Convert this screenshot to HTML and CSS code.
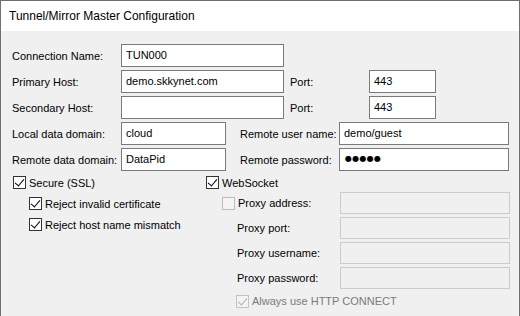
FILE: index.html
```html
<!DOCTYPE html>
<html lang="en">
<head>
  <meta charset="UTF-8" />
  <title>Tunnel/Mirror Master Configuration</title>
  <link rel="stylesheet" href="styles.css">
</head>
<body>
  <div class="window">
    <div class="titlebar">Tunnel/Mirror Master Configuration</div>

    <div class="content">
      <div class="row">
        <label class="lbl">Connection Name:</label>
        <div class="field wide">TUN000</div>
      </div>
      <div class="row">
        <label class="lbl">Primary Host:</label>
        <div class="field wide">demo.skkynet.com</div>
        <label class="lbl port-lbl">Port:</label>
        <div class="field port">443</div>
      </div>
      <div class="row">
        <label class="lbl">Secondary Host:</label>
        <div class="field wide"></div>
        <label class="lbl port-lbl">Port:</label>
        <div class="field port">443</div>
      </div>
      <div class="row">
        <label class="lbl">Local data domain:</label>
        <div class="field short">cloud</div>
        <label class="lbl remote-lbl">Remote user name:</label>
        <div class="field long">demo/guest</div>
      </div>
      <div class="row">
        <label class="lbl">Remote data domain:</label>
        <div class="field short">DataPid</div>
        <label class="lbl remote-lbl">Remote password:</label>
        <div class="field long"><span class="dots">●●●●●</span></div>
      </div>

      <div class="options">
        <div class="col-left">
          <div class="check-row">
            <span class="box checked"></span>Secure (SSL)
          </div>
          <div class="check-row sub">
            <span class="box checked"></span>Reject invalid certificate
          </div>
          <div class="check-row sub">
            <span class="box checked"></span>Reject host name mismatch
          </div>
        </div>

        <div class="col-right">
          <div class="check-row">
            <span class="box checked"></span>WebSocket
          </div>
          <div class="proxy">
            <div class="proxy-row">
              <div class="proxy-lbl"><span class="box off"></span>Proxy address:</div>
              <div class="field disabled"></div>
            </div>
            <div class="proxy-row">
              <div class="proxy-lbl indent">Proxy port:</div>
              <div class="field disabled"></div>
            </div>
            <div class="proxy-row">
              <div class="proxy-lbl indent">Proxy username:</div>
              <div class="field disabled"></div>
            </div>
            <div class="proxy-row">
              <div class="proxy-lbl indent">Proxy password:</div>
              <div class="field disabled"></div>
            </div>
            <div class="proxy-row always">
              <span class="box checked grey"></span>Always use HTTP CONNECT
            </div>
          </div>
        </div>
      </div>

      <div class="group-title">Data Flow Direction</div>
    </div>
  </div>
</body>
</html>
```

FILE: styles.css
```css
* {
  box-sizing: border-box;
  margin: 0;
  padding: 0;
}

html, body {
  width: 520px;
  height: 316px;
  overflow: hidden;
}

body {
  font-family: "Liberation Sans", Arial, sans-serif;
  font-size: 11px;
  color: #000;
  background: #f0f0f0;
  white-space: nowrap;
}

.window {
  height: 316px;
  overflow: hidden;
  border: 1px solid #707070;
  border-bottom: none;
  background: #f0f0f0;
}

.titlebar {
  height: 30px;
  line-height: 30px;
  padding-left: 8px;
  background: #fff;
  font-size: 12px;
}

.content {
  padding: 13px 0 0 11px;
}

.row {
  display: flex;
  align-items: center;
  height: 23px;
  margin-bottom: 3px;
}

.lbl {
  width: 109px;
  flex-shrink: 0;
}

.port-lbl {
  width: 79px;
  margin-left: 6px;
}

.remote-lbl {
  width: 99px;
  margin-left: 14px;
}

.field {
  height: 23px;
  border: 1px solid #7a7a7a;
  background: #fff;
  padding: 0 0 2px 4px;
  display: flex;
  align-items: center;
  flex-shrink: 0;
}

.wide { width: 163px; }
.port { width: 67px; }
.short { width: 105px; }
.long { width: 170px; }

.dots {
  font-family: "DejaVu Sans", sans-serif;
  font-size: 8px;
  letter-spacing: 0.3px;
  padding-left: 1px;
}

.field.disabled {
  width: 170px;
  height: 22px;
  border-color: #cccccc;
  background: #f0f0f0;
}

/* checkbox area */
.options {
  display: flex;
  margin-top: -2px;
}

.col-left {
  width: 193px;
}

.check-row {
  display: flex;
  align-items: center;
  height: 21px;
  padding-left: 1px;
}

.check-row.sub {
  padding-left: 17px;
}

.box {
  width: 13px;
  height: 13px;
  border: 1px solid #333;
  background: #fff;
  margin-right: 3px;
  flex-shrink: 0;
  position: relative;
}

.box.checked::after {
  content: "";
  position: absolute;
  left: 3px;
  top: 0px;
  width: 4px;
  height: 8px;
  border-right: 1px solid #000;
  border-bottom: 1px solid #000;
  transform: rotate(40deg);
}

.box.off {
  border-color: #bcbcbc;
  background: #f4f4f4;
}

.box.grey {
  border-color: #c4c4c4;
  background: #f4f4f4;
}

.box.grey::after {
  border-color: #b0b0b0;
}

.proxy {
  padding-left: 17px;
  margin-top: -1px;
}

.proxy-row {
  display: flex;
  align-items: center;
  height: 22px;
  margin-bottom: 3px;
}

.proxy-lbl {
  width: 118px;
  display: flex;
  align-items: center;
}

.proxy-lbl.indent {
  padding-left: 15px;
}

.always {
  margin-top: -2px;
  padding-left: 14px;
  color: #7a7a7a;
}

.group-title {
  margin-top: 6px;
  padding-left: 9px;
}
```
